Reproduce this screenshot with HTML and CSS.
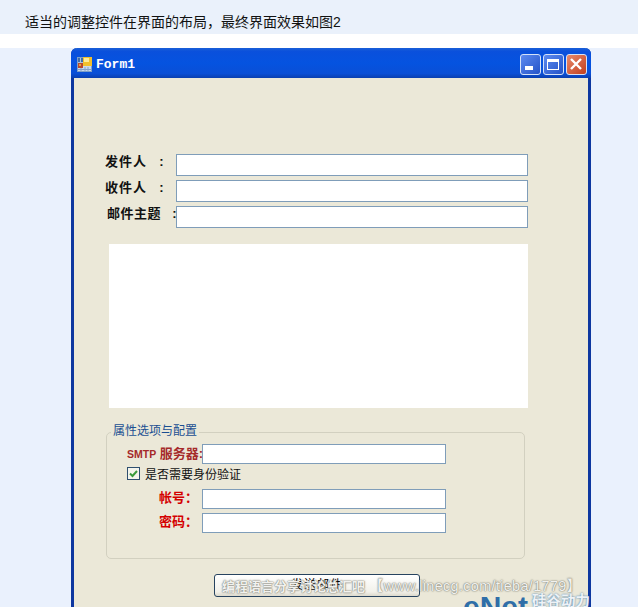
FILE: index.html
```html
<!DOCTYPE html>
<html lang="zh-CN">
<head>
  <meta charset="UTF-8">
  <meta name="viewport" content="width=device-width, initial-scale=1.0">
  <title>Form1</title>
  <link rel="stylesheet" href="styles.css">
</head>
<body>
  <p class="caption">适当的调整控件在界面的布局，最终界面效果如图2</p>

  <div class="window">
    <div class="titlebar">
      <svg class="app-icon" width="15" height="15" viewBox="0 0 15 15">
        <rect x="0.500" y="0.500" width="14" height="14" fill="#c9d9ec" stroke="#7f9fc6"/>
        <rect x="1" y="1" width="5" height="4" fill="#3f6eab"/>
        <path d="M1 5.500h5M3.500 1v4" stroke="#a9c3e0"/>
        <rect x="1" y="6" width="5" height="5" fill="#b8482f"/>
        <rect x="2" y="7" width="2" height="2" fill="#e8a23a"/>
        <rect x="6" y="0" width="9" height="9" fill="#f2c02c"/>
        <rect x="7" y="1" width="5" height="4" fill="#fdeb9a"/>
        <path d="M1 12.500h13M4 11v3M8 10v4M11 10v4" stroke="#86a3c9"/>
      </svg>
      <span class="title">Form1</span>
      <div class="win-buttons">
        <div class="win-btn">
          <svg width="21" height="21" viewBox="0 0 21 21"><rect x="5" y="12" width="8" height="4" fill="#fff"/></svg>
        </div>
        <div class="win-btn">
          <svg width="21" height="21" viewBox="0 0 21 21"><rect x="4.500" y="5.500" width="11" height="10" fill="none" stroke="#fff"/><rect x="4" y="5" width="12" height="3" fill="#fff"/></svg>
        </div>
        <div class="win-btn close">
          <svg width="21" height="21" viewBox="0 0 21 21"><path d="M5 5l10 10M15 5l-10 10" stroke="#fff" stroke-width="2.400"/></svg>
        </div>
      </div>
    </div>

    <div class="client">
      <div class="mail-rows">
        <div class="mail-row">
          <label class="mail-label">发件人  :</label>
          <div class="field"></div>
        </div>
        <div class="mail-row">
          <label class="mail-label">收件人  :</label>
          <div class="field"></div>
        </div>
        <div class="mail-row">
          <label class="mail-label subject">邮件主题  :</label>
          <div class="field"></div>
        </div>
      </div>

      <div class="body-box"></div>

      <fieldset class="options">
        <legend>属性选项与配置</legend>
        <div class="opt-row smtp">
          <label class="opt-label"><span class="latin">SMTP</span> 服务器:</label>
          <div class="field"></div>
        </div>
        <div class="check-row">
          <svg class="check" width="13" height="13" viewBox="0 0 13 13">
            <rect x="0.500" y="0.500" width="12" height="12" fill="#f4f4ec" stroke="#2f4f6f"/>
            <path d="M3 6.500l2.500 2.500 4.500-5" fill="none" stroke="#3a9a3a" stroke-width="2"/>
          </svg>
          <span>是否需要身份验证</span>
        </div>
        <div class="opt-row account">
          <label class="opt-label red">帐号：</label>
          <div class="field"></div>
        </div>
        <div class="opt-row">
          <label class="opt-label red">密码：</label>
          <div class="field"></div>
        </div>
      </fieldset>

      <div class="send-wrap">
        <button class="send">发送邮件</button>
      </div>
    </div>
  </div>

  <div class="watermark">编程语言分享讨论总汇吧 <span class="wm-url">【www.linecg.com/tieba/1779】</span></div>
  <div class="logo"><span class="enet">eNet</span><span class="cn">硅谷动力</span></div>
</body>
</html>
```

FILE: styles.css
```css
* {
  margin: 0;
  padding: 0;
  box-sizing: border-box;
  font-family: "Liberation Sans", "Noto Sans CJK SC", sans-serif;
}
html, body {
  height: 607px;
  overflow: hidden;
}
body {
  position: relative;
  background-color: #eaf1fd;
  display: flex;
  flex-direction: column;
}
.caption {
  height: 34px;
  padding: 13px 0 0 25px;
  margin-bottom: 14px;
  background: #eaf1fb;
  box-shadow: 0 14px 0 #fff;
  font-size: 14px;
  line-height: 18px;
  color: #111;
}
.window {
  flex: 1;
  width: 520px;
  margin-left: 71px;
  border: 3px solid #0d37a0;
  border-top: 0;
  border-bottom: 0;
  border-radius: 6px 6px 0 0;
  background: #ebe8d8;
  display: flex;
  flex-direction: column;
}
.titlebar {
  height: 30px;
  margin: 0 -3px;
  padding: 0 4px 0 6px;
  border-radius: 6px 6px 0 0;
  background: linear-gradient(#1a5fd8 0, #0a50dc 12%, #0553e0 50%, #0a4fd6 85%, #0a3fb0 100%);
  display: flex;
  align-items: center;
}
.app-icon {
  margin-top: 2px;
}
.title {
  margin-left: 4px;
  margin-top: 3px;
  font-family: "Liberation Mono", monospace;
  font-size: 13px;
  font-weight: bold;
  color: #fff;
}
.win-buttons {
  margin-left: auto;
  margin-top: 3px;
  display: flex;
  gap: 2px;
}
.win-btn {
  width: 21px;
  height: 21px;
  border: 1px solid #d5e2f8;
  border-radius: 3px;
  background: linear-gradient(135deg, #5c8af0, #2453c8);
  display: flex;
  align-items: center;
  justify-content: center;
}
.win-btn svg {
  flex: none;
}
.win-btn.close {
  background: linear-gradient(135deg, #e88a6c, #c23f1e);
}
.client {
  flex: 1;
  padding: 76px 0 0 31px;
}
.mail-rows {
  display: flex;
  flex-direction: column;
  gap: 4px;
}
.mail-row {
  display: flex;
  align-items: center;
}
.mail-label {
  width: 71px;
  padding-bottom: 6px;
  font-size: 13px;
  line-height: 16px;
  font-weight: bold;
  letter-spacing: 1px;
  word-spacing: 1.500px;
  color: #111;
  white-space: pre;
  overflow: hidden;
}
.mail-label.subject {
  padding-left: 2px;
  letter-spacing: 0.500px;
}
.field {
  background: #fff;
  border: 1px solid #7f9db9;
  height: 22px;
}
.mail-row .field {
  width: 352px;
}
.body-box {
  width: 419px;
  height: 164px;
  margin: 16px 0 0 4px;
  background: #fff;
}
.options {
  width: 419px;
  height: 135px;
  margin: 16px 0 0 1px;
  padding: 0 0 0 20px;
  border: 1px solid #d2d0c0;
  border-radius: 5px;
}
.options legend {
  margin-left: -16px;
  padding: 0 2px 2px;
  font-size: 12px;
  line-height: 14px;
  color: #1a4f92;
}
.opt-row {
  display: flex;
  align-items: center;
}
.opt-row .field {
  width: 244px;
  height: 20px;
}
.opt-row.smtp {
  margin-top: 4px;
}
.opt-row.account {
  margin-top: 7px;
  margin-bottom: 4px;
}
.opt-label {
  width: 75px;
  font-size: 13px;
  line-height: 16px;
  font-weight: bold;
  text-align: right;
  white-space: nowrap;
  color: #a52a2a;
}
.opt-row .opt-label.red {
  padding-right: 4px;
  padding-bottom: 2px;
  color: #d40000;
}
.latin {
  font-size: 10.500px;
}
.check-row {
  display: flex;
  align-items: center;
  gap: 5px;
  height: 18px;
  font-size: 12px;
  color: #111;
}
.send-wrap {
  padding: 15px 0 0 109px;
}
.send {
  display: block;
  width: 206px;
  height: 23px;
  padding-bottom: 4px;
  background: linear-gradient(#fff, #f2f1ea 80%, #dcd9cc);
  border: 1px solid #27435f;
  border-radius: 3px;
  font-size: 12px;
  letter-spacing: 1px;
  color: #000;
}
.watermark {
  position: absolute;
  left: 222px;
  top: 577px;
  font-size: 13px;
  font-weight: bold;
  line-height: 18px;
  white-space: nowrap;
  color: #f1f1ee;
  text-shadow: 0 0 2px #77776c, 0 0 1px #77776c;
}
.wm-url {
  font-size: 14.500px;
  font-weight: normal;
  letter-spacing: 0.300px;
}
.logo {
  position: absolute;
  left: 463px;
  top: 592px;
  display: flex;
  white-space: nowrap;
}
.enet {
  font-size: 30px;
  line-height: 30px;
  font-weight: bold;
  color: #2f6ea8;
}
.cn {
  margin-left: 4px;
  font-size: 14.500px;
  line-height: 18px;
  font-weight: bold;
  color: #eef2f6;
  text-shadow: 0 0 2px #2f6ea8;
}
```
